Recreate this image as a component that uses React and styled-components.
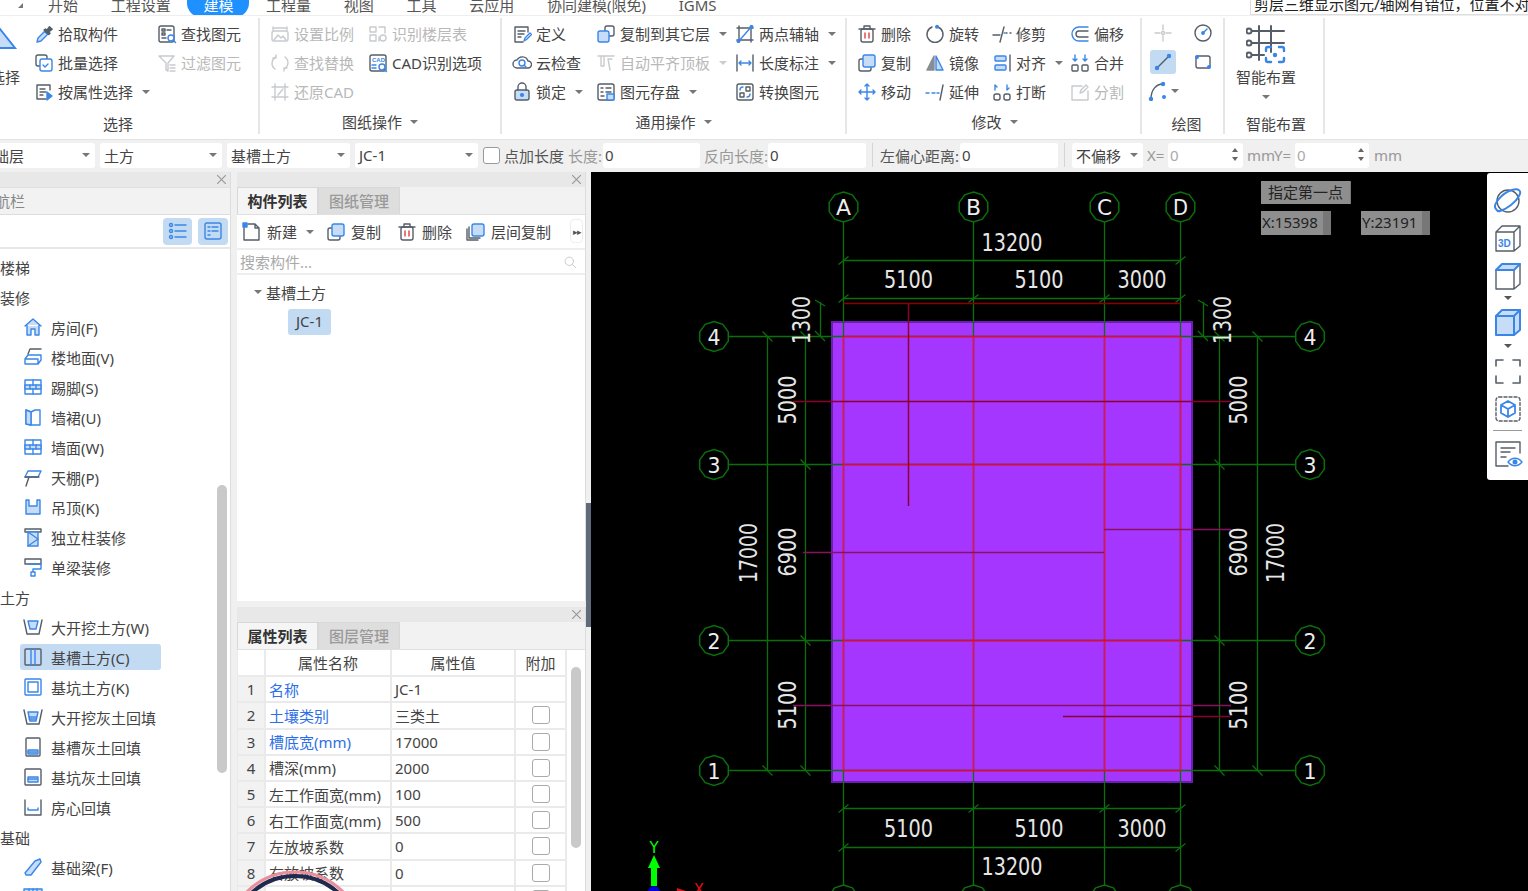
import React from 'react';
import styled, { createGlobalStyle } from 'styled-components';

const Global = createGlobalStyle`
  html, body { margin: 0; padding: 0; background: #f0f0f0; overflow: hidden; }
  * { box-sizing: border-box; }
  body { font-family: "Noto Sans", "Noto Sans CJK SC", sans-serif; font-size: 15px; color: #444; }
`;

const Page = styled.div`width: 1528px; height: 891px; overflow: hidden; display: flex; flex-direction: column; background: #f0f0f0;`;
const TabBar = styled.div`height: 16px; flex: none; background: #fff; display: flex; overflow: hidden; padding-left: 48px; gap: 32.7px; border-bottom: 1px solid #eee; position: relative;`;
const Tab = styled.div`
  height: 22px; margin-top: -5px; line-height: 20px; font-size: 15px; white-space: nowrap; color: ${p => (p.$on ? '#fff' : '#555')};
  ${p => p.$on && 'background:#1e90ff; border-radius: 0 0 14px 14px; padding: 0 16px; margin-left:-16px; margin-right:-16px;'}
`;
const TabArrow = styled.i`position: absolute; left: 18px; top: 3px; border-left: 5px solid transparent; border-bottom: 5px solid #777;`;
const SearchBox = styled.div`position: absolute; left: 1250px; top: -6px; width: 290px; height: 21px; border: 1px solid #ddd; background: #fff; color: #222; font-size: 15px; line-height: 19px; padding-left: 3px; white-space: nowrap;`;

const Ribbon = styled.div`height: 123px; flex: none; background: #fff; display: flex; padding-top: 2px;`;
const Group = styled.section`width: ${p => p.$w}px; height: 116px; border-right: 2px solid #e6e6e6; display: flex; flex-direction: column; padding-top: 1px; padding-left: ${p => p.$pl || 0}px; flex: none;`;
const Cols = styled.div`display: flex; height: 87px;`;
const Col = styled.div`width: ${p => p.$w}px; flex: none; display: flex; flex-direction: column;`;
const Item = styled.div`height: 29px; display: flex; align-items: center; gap: 4px; white-space: nowrap; color: ${p => (p.$off ? '#b8b8b8' : '#444')};`;
const Caret = styled.i`display: inline-block; margin-left: ${p => p.$ml ?? 5}px; margin-top: ${p => p.$mt || 0}px; border-left: 4px solid transparent; border-right: 4px solid transparent; border-top: 4px solid ${p => p.$c || '#777'}; flex: none;`;
const GroupLabel = styled.div`margin-top: auto; height: 20px; line-height: 20px; margin-bottom: ${p => (p.$up ? 2 : 0)}px; margin-left: ${p => p.$ml || 0}px; display: flex; justify-content: center; align-items: center; color: #444; gap: 3px;`;
const BigSelect = styled.div`width: 20px; margin-right: 14px; padding-top: 8px; display: flex; flex-direction: column; align-items: flex-end; overflow: hidden; flex: none;`;
const BigSelectText = styled.div`margin-top: 18px; line-height: 20px; white-space: nowrap;`;
const DrawGrid = styled.div`display: grid; grid-template-columns: 40px 40px; grid-auto-rows: 29px; height: 87px;`;
const DrawCell = styled.div`width: 26px; height: 24px; margin-top: 2px; border-radius: 3px; display: flex; align-items: center; justify-content: center; background: ${p => (p.$on ? '#c2daf2' : 'transparent')}; white-space: nowrap;`;
const Smart = styled.div`width: 82px; display: flex; flex-direction: column; align-items: center; height: 87px; padding-top: 5px;`;
const SmartText = styled.div`line-height: 20px; margin-top: 3px; white-space: nowrap;`;

const Bar = styled.div`height: 33px; flex: none; background: #f0f0f0; border-top: 1px solid #e3e3e3; display: flex; align-items: center; white-space: nowrap; padding-bottom: 2px;`;
const Select = styled.div`width: ${p => p.$w}px; margin-left: ${p => p.$ml ?? 5}px; height: 25px; background: #fff; border-radius: 3px; display: flex; align-items: center; justify-content: space-between; padding: 0 5px 0 4px; flex: none; color: #444;`;
const Label = styled.div`width: ${p => p.$w}px; margin-left: ${p => p.$ml || 0}px; color: ${p => (p.$dim ? '#999' : '#555')}; flex: none;`;
const Field = styled.div`width: ${p => p.$w}px; height: 25px; background: #fff; border-radius: 3px; padding-left: 2px; line-height: 24px; flex: none; color: ${p => (p.$dim ? '#aaa' : '#444')}; position: relative; margin-left: ${p => p.$ml || 0}px;`;
const Spin = styled.div`position: absolute; right: 5px; top: 5px; display: flex; flex-direction: column; gap: 5px;`;
const SpinUp = styled.i`display: block; border-left: 3px solid transparent; border-right: 3px solid transparent; border-bottom: 4px solid #666;`;
const SpinDown = styled.i`display: block; border-left: 3px solid transparent; border-right: 3px solid transparent; border-top: 4px solid #666;`;
const Check = styled.div`width: 17px; height: 17px; border: 1px solid #999; border-radius: 3px; background: #fff; flex: none; margin-left: ${p => p.$ml || 0}px;`;
const VLine = styled.div`width: 1px; height: 24px; background: #d5d5d5; flex: none; margin-left: ${p => p.$ml}px;`;

const Body = styled.div`flex: 1; min-height: 0; display: flex;`;
const Nav = styled.aside`width: 231px; flex: none; background: #fff; border-right: 1px solid #ddd; display: flex; flex-direction: column; position: relative; overflow: hidden;`;
const Middle = styled.div`width: 349px; margin-left: 6px; flex: none; display: flex; flex-direction: column; gap: 6px;`;
const Panel = styled.section`background: #fff; border-right: 1px solid #ddd; display: flex; flex-direction: column; position: relative; overflow: hidden; ${p => (p.$h ? `height:${p.$h}px;flex:none;` : 'flex:1;min-height:0;')}`;
const PanelTitle = styled.div`height: 15px; flex: none; background: #e8e8e8; display: flex; justify-content: flex-end; align-items: center; padding-right: 4px;`;
const CloseX = styled.svg`width: 9px; height: 9px; stroke: #999; stroke-width: 1.2; fill: none;`;
const TabsRow = styled.div`height: 28px; flex: none; background: #f2f2f2; display: flex; border-bottom: 1px solid #e0e0e0;`;
const NavHead = styled.div`height: 28px; flex: none; background: #f2f2f2; color: #888; line-height: 27px; border-bottom: 1px solid #ddd; border-top: 1px solid #e0e0e0; text-indent: -20px;`;
const NavTools = styled.div`height: 34px; flex: none; display: flex; justify-content: flex-end; align-items: center; gap: 6px; padding-right: 2px; border-bottom: 2px solid #e8e8e8;`;
const ViewBtn = styled.div`width: ${p => p.$w}px; height: 27px; background: #c2daf2; border-radius: 4px; display: flex; align-items: center; justify-content: center;`;
const NavList = styled.div`flex: 1; padding-top: 4px; overflow: hidden; display: flex; flex-direction: column;`;
const Section = styled.div`height: 30px; flex: none; line-height: 30px; white-space: nowrap;`;
const NavRow = styled.div`height: 26px; flex: none; margin: 1px 0 3px 20px; width: 141px; display: flex; align-items: center; gap: 8px; padding-left: 3px; border-radius: 3px; white-space: nowrap; background: ${p => (p.$on ? '#c2daf2' : 'transparent')};`;
const ScrollThumb = styled.div`position: absolute; left: ${p => p.$x}px; top: ${p => p.$y}px; width: 10px; height: ${p => p.$h}px; border-radius: 5px; background: #c9c9c9;`;

const PTab = styled.div`width: ${p => (p.$on ? 81 : 82)}px; background: ${p => (p.$on ? '#f5f5f5' : '#dedede')}; color: ${p => (p.$on ? '#333' : '#999')}; font-weight: ${p => (p.$on ? 700 : 500)}; border: 1px solid #d8d8d8; border-bottom: none; text-align: center; line-height: 26px;`;
const ListTools = styled.div`height: 35px; flex: none; display: flex; align-items: center; padding-left: 5px; position: relative; border-bottom: 2px solid #eee; white-space: nowrap;`;
const ToolBtn = styled.div`display: flex; align-items: center; gap: 5px; margin-left: ${p => p.$ml || 0}px; margin-right: ${p => p.$mr}px;`;
const More = styled.div`position: absolute; left: 333px; top: 4px; width: 13px; height: 24px; border: 1px solid #eee; border-radius: 4px; display: flex; align-items: center; justify-content: center; color: #555; font-size: 9px; letter-spacing: -1px;`;
const SearchRow = styled.div`height: 25px; flex: none; padding: 0 8px 0 3px; display: flex; align-items: center; justify-content: space-between; color: #aaa; border-bottom: 2px solid #eee;`;
const Tree = styled.div`flex: 1; padding: 4px 0 0 17px;`;
const TreeHead = styled.div`height: 26px; display: flex; align-items: center; gap: 4px;`;
const Chip = styled.div`margin: 4px 0 0 34px; width: 43px; height: 26px; border-radius: 3px; background: #c2daf2; line-height: 25px; text-align: center;`;

const Table = styled.table`border-collapse: collapse; width: 329px; margin-left: -1px; table-layout: fixed; background: #fff;`;
const Th = styled.th`height: 26.2px; padding: 0; font-weight: 400; color: #444; border: 2px solid #eaeaea; border-top: none;`;
const Td = styled.td`height: 26.2px; padding: 0 0 0 ${p => p.$pl ?? 3}px; border: 2px solid #eaeaea; white-space: nowrap; overflow: hidden; color: ${p => (p.$blue ? '#2c6fe8' : '#444')};`;
const IndexCell = styled(Td)`background: #f2f2f2; text-align: center; padding: 0;`;
const CheckBox = styled.div`width: 18px; height: 18px; border: 1px solid #aaa; border-radius: 3px; margin: auto;`;

const Splitter = styled.div`width: 5px; flex: none; background: #f0f0f0; position: relative;`;
const Handle = styled.div`position: absolute; left: 0; top: 331px; width: 5px; height: 124px; background: #5f6b78;`;
const Canvas = styled.main`flex: 1; background: #000; position: relative; overflow: hidden;`;
const CadSvg = styled.svg`display: block;`;
const Prompt = styled.div`position: absolute; left: ${p => p.$x}px; top: ${p => p.$y}px; width: ${p => p.$w}px; height: ${p => p.$h}px; background: #8e8e8e; color: #222; line-height: ${p => p.$h - 1}px; padding-left: ${p => p.$pl}px; white-space: nowrap; border-right: ${p => p.$br}px solid #777; `;
const SideTools = styled.div`position: absolute; right: 0; top: 1px; width: 41px; height: 307px; background: #fff; border-radius: 3px 0 0 3px; display: flex; flex-direction: column; align-items: center; padding-top: 13px;`;
const SideGap = styled.div`height: ${p => p.$h}px; display: flex; align-items: center;`;
const SideLine = styled.div`width: 29px; height: 1px; background: #999; margin: 6px 0 8px;`;
const CursorRing = styled.svg`position: absolute; left: 240px; top: 865px; pointer-events: none;`;

const Svg = styled.svg`
  width: ${p => p.$s || 20}px; height: ${p => p.$s || 20}px; flex: none; opacity: ${p => (p.$off ? 0.32 : 1)};
  fill: none; stroke: #555e68; stroke-width: 1.4; stroke-linecap: round; stroke-linejoin: round;
  .b { stroke: #3a86e8; } .pale { fill: #c7ddf7; } .solid { fill: #3a86e8; stroke: #3a86e8; } .dark { fill: #555e68; } .red { stroke: #e04040; } .thin { stroke-width: 1; }
`;

const I = {
  pick: <><path d="M3 18l1-4 6.5-6.5 3 3L7 17z" className="pale b" /><path className="dark" d="M10 6l1.5-1 1.5 1 2.5-3.2 2.7 2.4-3.2 2.6 1 1.5-1.2 1.3z" /></>,
  batch: <><rect x="2" y="2" width="11" height="11" rx="2" /><rect x="6" y="6" width="12" height="12" rx="2" fill="#fff" className="b" /><path className="b" d="M9 12l2 2 3-3" /></>,
  attr: <><path d="M16 8V3H3v14h9M6 7h5M6 10h6M6 13h3" /><path className="solid" d="M13 10v8l5-4z" /></>,
  find: <><rect x="2" y="2" width="15" height="16" rx="2" /><rect x="5" y="5" width="3" height="2" /><rect x="5" y="9" width="3" height="2" /><path d="M10 6h4M5 14h4" /><circle className="b" cx="14" cy="14" r="3" fill="#fff" /><path className="b" d="M16 16l2.5 2.5" /></>,
  filter: <><path d="M2 3h15l-6 7v8l-2-1v-7zM13 12h5M13 15h5M13 18h5" /></>,
  scale: <><path d="M3 6V3M17 6V3M3 4h14" /><rect x="2" y="7" width="16" height="10" rx="2" /><path d="M4 16l4-5 3 3 2-2 3 4" /></>,
  layerId: <><path d="M2 8V3h6v5zM11 3h6v6M2 11h6v6H2zM11 13v4" /><circle cx="15" cy="14" r="3" /></>,
  replace: <><path d="M5 16A7 7 0 0 1 6 4M15 4a7 7 0 0 1-1 12M6 2v3H3M14 18v-3h3" /></>,
  cadOpt: <><rect x="2" y="2" width="16" height="16" rx="2" /><text x="4" y="9" fontSize="6" fontWeight="700" fill="#3a86e8" stroke="none" fontFamily="Liberation Sans">CAD</text><path d="M4 12h4M4 15h4" className="b" /><circle className="b" cx="14" cy="14" r="3" fill="#fff" /><path className="b" d="M16 16l2.5 2.5" /></>,
  restore: <><path d="M5 2v16M15 2v16M2 5h16M2 15h16M13 7l-5 6" /></>,
  define: <><path d="M16 8V3H3v15h8M6 7h7M6 10h6M6 13h3" /><path className="b" d="M12 17l1-3 5-5 1.500 1.500-5 5z" /></>,
  cloud: <><path d="M5 15a4 4 0 0 1 0-8 6 6 0 0 1 11 1 3.500 3.500 0 0 1 0 7z" /><circle className="b" cx="10" cy="10" r="3" /><path className="b" d="M12 12l2 2" /></>,
  lock: <><rect x="3" y="8" width="14" height="10" rx="2" className="pale" /><path d="M6 8V5a4 4 0 0 1 8 0v3" /><circle className="solid" cx="10" cy="13" r="1.400" /></>,
  copyTo: <><rect x="9" y="2" width="9" height="10" rx="2" /><rect x="2" y="7" width="11" height="11" rx="2" className="pale b" /></>,
  align: <><path d="M2 3h16M5 4v9h3V4M12 6l2 11M12 6h4" /></>,
  save: <><rect x="2" y="2" width="16" height="16" rx="2" /><path d="M5 6h2M10 6h5M5 10h2M10 10h5M5 14h3" /><rect className="pale b" x="11" y="12" width="7" height="6" /></>,
  twoPoint: <><path d="M4 2v16M16 2v16M2 4h16M2 16h16" /><path className="b" d="M3 18L17 2" /><circle className="solid" cx="3.500" cy="17" r="1.400" /><circle className="solid" cx="16.500" cy="3" r="1.400" /></>,
  dim: <><path d="M2 2v16M18 2v16" /><path className="b" d="M4 10h12M6 8l-2 2 2 2M14 8l2 2-2 2" /></>,
  convert: <><rect x="2" y="2" width="16" height="16" rx="2" /><rect x="5" y="11" width="4" height="4" /><rect x="11" y="5" width="4" height="4" /><path className="b" d="M5 8c0-2 1-3 3-3M15 12c0 2-1 3-3 3" /></>,
  del: <><rect x="4" y="5" width="12" height="13" rx="2" /><path d="M2 5h16M7 5V2h6v3" /><path className="red" d="M8 9v5M12 9v5" /></>,
  rotate: <><path d="M13 3a8 8 0 1 1-6 0" /><circle className="solid" cx="12" cy="2.800" r="1.300" /></>,
  trim: <><path d="M1 11h7M14 9h1M18 9h1" /><path d="M12 3L8 18" /><path className="b" d="M12 9h1" /></>,
  offset: <><path className="b" d="M18 3H9a7 7 0 0 0 0 14h9" /><path d="M18 7H9a3 3 0 0 0 0 6h9" /></>,
  copy: <><rect x="2" y="6" width="12" height="12" rx="2" /><rect x="6" y="2" width="12" height="12" rx="2" className="pale b" /></>,
  mirror: <><path d="M9 3L2 17h7z" className="dark" opacity=".7" /><path className="b pale" d="M11 3l7 14h-7z" /></>,
  alignObj: <><rect className="pale b" x="3" y="3" width="11" height="5" rx="1" /><rect className="pale b" x="3" y="12" width="11" height="5" rx="1" /><path d="M18 2v16" /></>,
  merge: <><rect x="2" y="12" width="6" height="6" rx="1" /><rect x="12" y="12" width="6" height="6" rx="1" /><path className="b" d="M5 2v6M15 2v6M3 6l2 2 2-2M13 6l2 2 2-2" /></>,
  move: <><path className="b" d="M10 2v16M2 10h16M8 4l2-2 2 2M8 16l2 2 2-2M4 8l-2 2 2 2M16 8l2 2-2 2" /></>,
  extend: <><path className="b" d="M1 11h3M7 11h3M12 11h2" /><path d="M18 3l-3 15" /></>,
  breakIt: <><rect x="2" y="12" width="6" height="6" rx="2" /><rect x="12" y="12" width="6" height="6" rx="2" /><path className="b" d="M3 8V3M3 3l2 2M15 3v5M15 8l2-2" /></>,
  split: <><path d="M12 4H2v14h16V9M16 3l-5 5-1 3 3-1 5-5z" /></>,
  point: <><path d="M10 2v5M10 13v5M2 10h5M13 10h5" /><circle cx="10" cy="10" r="1.500" /></>,
  clock: <><circle cx="10" cy="10" r="8" /><path className="b" d="M10 10l4-4" /><circle className="solid" cx="10" cy="10" r="1.200" /></>,
  line: <><path d="M4 16L16 4" /><circle className="solid" cx="4" cy="16" r="1.500" /><circle className="solid" cx="16" cy="4" r="1.500" /></>,
  rect: <><rect x="3" y="4" width="14" height="12" rx="2" /><circle className="solid" cx="4" cy="5" r="1.300" /><circle className="solid" cx="16" cy="15" r="1.300" /></>,
  arc: <><path d="M3 18C3 9 8 3 15 3" /><circle className="solid" cx="3" cy="18" r="1.500" /><circle className="solid" cx="15" cy="3" r="1.500" /><circle className="solid" cx="16" cy="16" r="1.300" /></>,
  smart: <><path strokeWidth="2" d="M13 2v34M25 2v26M6 7h32M6 19h32M6 31h12" /><circle cx="3" cy="7" r="2.500" strokeWidth="2" /><circle cx="3" cy="19" r="2.500" strokeWidth="2" /><circle cx="3" cy="31" r="2.500" strokeWidth="2" /><path className="b" strokeWidth="2.400" d="M25 23h-3a2 2 0 0 0-2 2v2M33 23h3a2 2 0 0 1 2 2v2M20 34v2a2 2 0 0 0 2 2h3M38 34v2a2 2 0 0 1-2 2h-3" /><circle className="solid" cx="29" cy="31" r="1.500" /></>,
  listView: <><path className="b" d="M7 4h11M7 10h11M7 16h11" /><circle className="b" cx="3" cy="4" r="1.500" /><circle className="b" cx="3" cy="10" r="1.500" /><circle className="b" cx="3" cy="16" r="1.500" /></>,
  cardView: <><rect className="b" x="2" y="2" width="16" height="16" rx="2" /><path className="b" d="M5 6h2M9 6h6M5 10h2M9 10h6M5 14h2" /></>,
  house: <><path className="b pale" fill="none" d="M2 9l8-7 8 7M4 8v10h4v-6h4v6h4V8" /></>,
  floor: <><path d="M5 7l2-5h11" /><path className="b" d="M2 17V12l3-4h13v5l-3 4z M2 12h13v5" /></>,
  brick: <><rect className="b" x="2" y="3" width="16" height="14" /><path className="b pale" d="M2 8h16v4H2z" /><path className="b" d="M10 3v5M7 8v4M13 8v4M10 12v5" /></>,
  skirt: <><path className="b" d="M3 3l5 2v13l-5-1zM8 5l4-2h5v15H8" /><path className="b pale" d="M3 3l5 2v13l-5-1z" /></>,
  ceiling: <><path className="b" d="M5 4h13l-3 6H2z" /><path d="M2 10h14M6 10l-3 9" /></>,
  hang: <><path className="b pale" d="M3 3h3v6h8V3h3v14H3z" /></>,
  column: <><path d="M2 2h16v3H2z" /><path className="b pale" d="M5 5h10v14H5z" /><path className="b" d="M5 5l10 7-10 7" /></>,
  beam: <><rect x="2" y="2" width="16" height="5" /><path className="b" d="M6 7h12v5h-8v3M8 15h4v4H8z" /></>,
  dig: <><path d="M1 3l3 14h12l3-14" /><path className="b pale" d="M5 4h10l-2 8H7z" /></>,
  trench: <><rect x="2" y="2" width="16" height="16" rx="1" className="pale" /><path className="b" d="M8 2v16M12 2v16" /></>,
  pit: <><rect className="b" x="2" y="2" width="16" height="16" rx="1" /><rect className="b" x="5" y="5" width="10" height="10" fill="#fff" /></>,
  digFill: <><path d="M1 3l3 14h12l3-14" /><path className="b pale" d="M5 5h10l-2 9H7z" /><path className="b" strokeDasharray="1 1" d="M6 10h8M6 12h8" /></>,
  trenchFill: <><rect x="3" y="1" width="14" height="18" rx="1" /><path className="b pale" d="M5 13h10v4H5z" /><path className="b" strokeDasharray="1 1" d="M5 15h10" /></>,
  pitFill: <><rect x="2" y="2" width="16" height="16" rx="1" /><path className="b pale" d="M5 10h10v5H5z" /><path className="b" strokeDasharray="1 1" d="M5 12h10" /></>,
  roomFill: <><path d="M2 3v15h16V3" /><path className="b" d="M5 13h10M5 11v2M15 11v2" /></>,
  fbeam: <><path className="b pale" d="M2 16l10-12 5-2 1 3L8 18H3z" /></>,
  fbeam2: <><rect className="b pale" x="1" y="2" width="18" height="14" /><path className="b" d="M6 2v14M10 2v14M14 2v14" /></>,
  newDoc: <><path d="M2 5v13h15V6l-4-4H6M13 2v4h4" /><rect className="solid" x="1" y="1" width="4" height="4" /></>,
  floorCopy: <><path d="M1 7v11h11" /><path d="M3 5v11h11" /><rect className="pale b" x="6" y="2" width="12" height="12" rx="2" fill="#fff" /></>,
  search: <><circle cx="9" cy="9" r="6" /><path d="M13.500 13.500L18 18" /></>,
  orbit: <><circle cx="15" cy="15" r="11" /><path className="b" d="M3 23C-1 19 9 7 19 4c7-2 10 1 7 6-3 6-12 13-19 15-2 .5-3 0-4-2z" strokeWidth="2" /></>,
  cube3d: <><path d="M3 10l6-6h18v20l-6 5H3zM3 10h18v19M21 10l6-6" /><text x="5" y="25" fontSize="10" fontWeight="700" fill="#3a86e8" stroke="none" fontFamily="Liberation Sans">3D</text></>,
  cubeTop: <><path d="M3 10v19h18V10M21 29l6-5V4" /><path className="b pale" d="M3 10l6-6h18l-6 6z" strokeWidth="2" /></>,
  cubeFill: <><path className="b pale" strokeWidth="2" d="M3 10l6-6h18v20l-6 5H3z" /><path className="b" strokeWidth="2" d="M3 10h18v19M21 10l6-6" /></>,
  corners: <><path d="M3 10V4h7M20 4h7v6M3 20v7h7M27 20v7h-7" strokeWidth="1.600" /></>,
  dashCube: <><rect x="3" y="3" width="24" height="24" rx="3" strokeDasharray="3 2" /><path className="b" strokeWidth="1.800" d="M15 7l7 4v8l-7 4-7-4v-8zM8 11l7 4 7-4M15 15v8" /></>,
  docEye: <><path d="M27 14V3H3v24h12M8 9h14M8 13h9M8 18h5" /><path className="b" d="M15 23c4-5 10-5 14 0-4 5-10 5-14 0z" /><circle className="solid" cx="22" cy="23" r="1.800" /></>,
};

const Ico = ({ n, s, off, vb = 20 }) => <Svg $s={s} $off={off} viewBox={`0 0 ${vb} ${vb}`}>{I[n]}</Svg>;
const Close = () => <CloseX viewBox="0 0 9 9"><path d="M0 0l9 9M9 0L0 9" /></CloseX>;

const Btn = ({ n, t, off, caret }) => (
  <Item $off={off}>
    <Ico n={n} off={off} />
    <span>{t}</span>
    {caret && <Caret $c={off ? '#ccc' : '#777'} />}
  </Item>
);

const ribbonTabs = ['开始', '工程设置', '建模', '工程量', '视图', '工具', '云应用', '协同建模(限免)', 'IGMS'];

const navA = [['house', '房间(F)'], ['floor', '楼地面(V)'], ['brick', '踢脚(S)'], ['skirt', '墙裙(U)'], ['brick', '墙面(W)'], ['ceiling', '天棚(P)'], ['hang', '吊顶(K)'], ['column', '独立柱装修'], ['beam', '单梁装修']];
const navB = [['dig', '大开挖土方(W)'], ['trench', '基槽土方(C)', true], ['pit', '基坑土方(K)'], ['digFill', '大开挖灰土回填'], ['trenchFill', '基槽灰土回填'], ['pitFill', '基坑灰土回填'], ['roomFill', '房心回填']];
const navC = [['fbeam', '基础梁(F)'], ['fbeam2', '']];

const props = [
  ['名称', 'JC-1', true, false], ['土壤类别', '三类土', true, true], ['槽底宽(mm)', '17000', true, true], ['槽深(mm)', '2000', false, true],
  ['左工作面宽(mm)', '100', false, true], ['右工作面宽(mm)', '500', false, true], ['左放坡系数', '0', false, true], ['右放坡系数', '0', false, true], ['', '', false, true],
];

const NavItems = ({ items }) => items.map(([n, t, on]) => (
  <NavRow key={n + t} $on={on}><Ico n={n} /><span>{t}</span></NavRow>
));

const GREEN = '#0b6f0b';
const XS = [843.5, 973.5, 1104.5, 1180.5];
const YS = [336.5, 464.5, 640.5, 770.5];
const poly = (cx, cy, r = 15) => Array.from({ length: 10 }, (_, i) => {
  const a = (i * 36 - 90) * Math.PI / 180;
  return `${(cx + r * Math.cos(a)).toFixed(1)},${(cy + r * Math.sin(a)).toFixed(1)}`;
}).join(' ');

const DimText = ({ x, y, t, w, rot }) => rot
  ? <text transform={`translate(${x + 9} ${y}) rotate(-90)`} textAnchor="middle" fontFamily="DejaVu Sans" fontSize="24" fill="#e6e6e6" textLength={w} lengthAdjust="spacingAndGlyphs">{t}</text>
  : <text x={x} y={y + 9} textAnchor="middle" fontFamily="DejaVu Sans" fontSize="24" fill="#e6e6e6" textLength={w} lengthAdjust="spacingAndGlyphs">{t}</text>;

const Bubble = ({ x, y, t }) => (
  <g>
    <polygon points={poly(x, y)} fill="#000" stroke={GREEN} strokeWidth="1.500" />
    <text x={x} y={y + 8} textAnchor="middle" fontFamily="DejaVu Sans" fontSize="22" fill="#eee" textLength={t === 'A' || t === 'D' || t === 'B' || t === 'C' ? 15 : 13} lengthAdjust="spacingAndGlyphs">{t}</text>
  </g>
);

const Ln = ({ x1, y1, x2, y2, c = GREEN, w = 1.300 }) => <line x1={x1} y1={y1} x2={x2} y2={y2} stroke={c} strokeWidth={w} />;

const CadDrawing = () => {
  const hDims = [260.5, 298.5, 808.5, 847.5];
  const vDims = [767.5, 805.5, 1219.5, 1257.5];
  return (
    <CadSvg width="937" height="719" viewBox="591 172 937 719">
      <rect x="832" y="322" width="360" height="460" fill="#a536ff" stroke="#6a1fb0" strokeWidth="2" />
      {XS.map(x => <Ln key={x} x1={x} y1={222} x2={x} y2={888} />)}
      {YS.map(y => <Ln key={y} x1={729} y1={y} x2={1295} y2={y} />)}
      {hDims.map(y => <Ln key={y} x1={843.5} y1={y} x2={1180.5} y2={y} />)}
      {vDims.map(x => <Ln key={x} x1={x} y1={336.5} x2={x} y2={770.5} />)}
      <Ln x1={820.5} y1={302} x2={820.5} y2={336.5} />
      <Ln x1={1203.5} y1={302} x2={1203.5} y2={336.5} />
      {hDims.flatMap(y => XS.filter(x => (y === 260.5 || y === 847.5) ? x !== 973.5 && x !== 1104.5 : true).map(x => <Ln key={`${x}-${y}`} x1={x - 5} y1={y + 4} x2={x + 5} y2={y - 4} />))}
      {vDims.flatMap(x => YS.filter(y => (x === 767.5 || x === 1257.5) ? y === 336.5 || y === 770.5 : true).map(y => <Ln key={`${x}_${y}`} x1={x - 5} y1={y - 5} x2={x + 5} y2={y + 5} />))}
      <Ln x1={815} y1={331} x2={825} y2={341} />
      <Ln x1={815} y1={300} x2={825} y2={306} />
      <Ln x1={1198} y1={331} x2={1208} y2={341} />
      <Ln x1={1198} y1={300} x2={1208} y2={306} />

      {XS.map(x => <Ln key={x} x1={x} y1={336.5} x2={x} y2={770.5} c="#e6104f" w={1.500} />)}
      {YS.map(y => <Ln key={y} x1={843.5} y1={y} x2={1180.5} y2={y} c="#f00038" w={1.500} />)}
      <Ln x1={843.5} y1={303.5} x2={1180.5} y2={303.5} c="#8a0000" w={1.500} />
      <Ln x1={908.5} y1={303.5} x2={908.5} y2={506} c="#8a0028" w={1.500} />
      <Ln x1={793} y1={401.5} x2={1231} y2={401.5} c="#8a0028" w={1.500} />
      <Ln x1={803} y1={552.5} x2={1104} y2={552.5} c="#8a1060" w={1.500} />
      <Ln x1={1104} y1={529.5} x2={1231} y2={529.5} c="#8a1060" w={1.500} />
      <Ln x1={793} y1={705.500} x2={1231} y2={705.500} c="#8a1060" w={1.500} />
      <Ln x1={1063} y1={716.500} x2={1230} y2={716.500} c="#8a0028" w={1.500} />

      {['A', 'B', 'C', 'D'].map((t, i) => <Bubble key={t} x={XS[i]} y={207} t={t} />)}
      {XS.map(x => <polygon key={x} points={poly(x, 900)} fill="#000" stroke={GREEN} strokeWidth="1.500" />)}
      {['4', '3', '2', '1'].flatMap((t, i) => [<Bubble key={t + 'l'} x={714} y={YS[i]} t={t} />, <Bubble key={t + 'r'} x={1310} y={YS[i]} t={t} />])}

      <DimText x={1012} y={242} t="13200" w={61} />
      <DimText x={908.500} y={279} t="5100" w={49} />
      <DimText x={1039} y={279} t="5100" w={49} />
      <DimText x={1142} y={279} t="3000" w={49} />
      <DimText x={908.500} y={828} t="5100" w={49} />
      <DimText x={1039} y={828} t="5100" w={49} />
      <DimText x={1142} y={828} t="3000" w={49} />
      <DimText x={1012} y={866} t="13200" w={61} />
      <DimText rot x={801} y={320} t="1300" w={48} />
      <DimText rot x={787} y={400} t="5000" w={49} />
      <DimText rot x={787} y={552} t="6900" w={49} />
      <DimText rot x={787} y={705} t="5100" w={49} />
      <DimText rot x={748} y={553} t="17000" w={60} />
      <DimText rot x={1222} y={320} t="1300" w={48} />
      <DimText rot x={1238} y={400} t="5000" w={49} />
      <DimText rot x={1238} y={552} t="6900" w={49} />
      <DimText rot x={1238} y={705} t="5100" w={49} />
      <DimText rot x={1275} y={553} t="17000" w={60} />

      <text x={654} y={853} textAnchor="middle" fontFamily="DejaVu Sans" fontSize="15" fill="#00ff00">Y</text>
      <rect x="651" y="864" width="6" height="22" fill="#00ff00" />
      <polygon points="654,855 648,868 660,868" fill="#00ff00" />
      <circle cx="654" cy="892" r="6" fill="#0000d0" />
      <polygon points="677,888 686,891 677,895" fill="#e01010" />
      <text x={699} y={895} textAnchor="middle" fontFamily="DejaVu Sans" fontSize="15" fill="#e01010">X</text>
    </CadSvg>
  );
};

export default function App() {
  return (
    <Page>
      <Global />
      <TabBar>
        <TabArrow />
        {ribbonTabs.map(t => <Tab key={t} $on={t === '建模'}>{t}</Tab>)}
        <SearchBox>剪层三维显示图元/轴网有错位，位置不对层</SearchBox>
      </TabBar>

      <Ribbon>
        <Group $w={260}>
          <Cols>
            <BigSelect>
              <svg width="20" height="22" viewBox="0 0 20 22"><path d="M-8 21L0 2l15 19z" fill="#c7ddf7" stroke="#3a86e8" strokeWidth="2" /></svg>
              <BigSelectText>选择</BigSelectText>
            </BigSelect>
            <Col $w={123}>
              <Btn n="pick" t="拾取构件" />
              <Btn n="batch" t="批量选择" />
              <Btn n="attr" t="按属性选择" caret />
            </Col>
            <Col $w={100}>
              <Btn n="find" t="查找图元" />
              <Btn n="filter" t="过滤图元" off />
            </Col>
          </Cols>
          <GroupLabel $ml={-22}>选择</GroupLabel>
        </Group>

        <Group $w={242} $pl={10}>
          <Cols>
            <Col $w={98}>
              <Btn n="scale" t="设置比例" off />
              <Btn n="replace" t="查找替换" off />
              <Btn n="restore" t="还原CAD" off />
            </Col>
            <Col $w={130}>
              <Btn n="layerId" t="识别楼层表" off />
              <Btn n="cadOpt" t="CAD识别选项" />
            </Col>
          </Cols>
          <GroupLabel $up $ml={-10}>图纸操作<Caret /></GroupLabel>
        </Group>

        <Group $w={345} $pl={10}>
          <Cols>
            <Col $w={84}>
              <Btn n="define" t="定义" />
              <Btn n="cloud" t="云检查" />
              <Btn n="lock" t="锁定" caret />
            </Col>
            <Col $w={139}>
              <Btn n="copyTo" t="复制到其它层" caret />
              <Btn n="align" t="自动平齐顶板" off caret />
              <Btn n="save" t="图元存盘" caret />
            </Col>
            <Col $w={110}>
              <Btn n="twoPoint" t="两点辅轴" caret />
              <Btn n="dim" t="长度标注" caret />
              <Btn n="convert" t="转换图元" />
            </Col>
          </Cols>
          <GroupLabel $up $ml={-10}>通用操作<Caret /></GroupLabel>
        </Group>

        <Group $w={295} $pl={10}>
          <Cols>
            <Col $w={68}>
              <Btn n="del" t="删除" />
              <Btn n="copy" t="复制" />
              <Btn n="move" t="移动" />
            </Col>
            <Col $w={67}>
              <Btn n="rotate" t="旋转" />
              <Btn n="mirror" t="镜像" />
              <Btn n="extend" t="延伸" />
            </Col>
            <Col $w={78}>
              <Btn n="trim" t="修剪" />
              <Btn n="alignObj" t="对齐" caret />
              <Btn n="breakIt" t="打断" />
            </Col>
            <Col $w={60}>
              <Btn n="offset" t="偏移" />
              <Btn n="merge" t="合并" />
              <Btn n="split" t="分割" off />
            </Col>
          </Cols>
          <GroupLabel $up $ml={-8}>修改<Caret /></GroupLabel>
        </Group>

        <Group $w={83} $pl={8}>
          <DrawGrid>
            <DrawCell><Ico n="point" off /></DrawCell>
            <DrawCell><Ico n="clock" /></DrawCell>
            <DrawCell $on><Ico n="line" /></DrawCell>
            <DrawCell><Ico n="rect" /></DrawCell>
            <DrawCell><Ico n="arc" /><Caret $ml={3} /></DrawCell>
          </DrawGrid>
          <GroupLabel>绘图</GroupLabel>
        </Group>

        <Group $w={100}>
          <Smart>
            <Ico n="smart" s={40} vb={40} />
            <SmartText>智能布置</SmartText>
            <Caret $ml={0} $mt={8} />
          </Smart>
          <GroupLabel $ml={4}>智能布置</GroupLabel>
        </Group>
      </Ribbon>

      <Bar>
        <Select $w={105} $ml={-10}><span>础层</span><Caret /></Select>
        <Select $w={122}><span>土方</span><Caret /></Select>
        <Select $w={123}><span>基槽土方</span><Caret /></Select>
        <Select $w={123}><span>JC-1</span><Caret /></Select>
        <Check $ml={5} />
        <Label $w={61} $ml={4}>点加长度</Label>
        <Label $w={35} $ml={3} $dim>长度:</Label>
        <Field $w={97}>0</Field>
        <Label $w={64} $ml={4} $dim>反向长度:</Label>
        <Field $w={98}>0</Field>
        <VLine $ml={6} />
        <Label $w={80} $ml={7}>左偏心距离:</Label>
        <Field $w={98}>0</Field>
        <VLine $ml={6} />
        <Select $w={71} $ml={7}><span>不偏移</span><Caret /></Select>
        <Label $w={21} $ml={4} $dim>X=</Label>
        <Field $w={75} $dim>0<Spin><SpinUp /><SpinDown /></Spin></Field>
        <Label $w={27} $ml={4} $dim>mm</Label>
        <Label $w={21} $dim>Y=</Label>
        <Field $w={74} $dim>0<Spin><SpinUp /><SpinDown /></Spin></Field>
        <Label $w={30} $ml={5} $dim>mm</Label>
      </Bar>

      <Body>
        <Nav>
          <PanelTitle><Close /></PanelTitle>
          <NavHead>导航栏</NavHead>
          <NavTools>
            <ViewBtn $w={29}><Ico n="listView" /></ViewBtn>
            <ViewBtn $w={30}><Ico n="cardView" /></ViewBtn>
          </NavTools>
          <NavList>
            <Section>楼梯</Section>
            <Section>装修</Section>
            <NavItems items={navA} />
            <Section>土方</Section>
            <NavItems items={navB} />
            <Section>基础</Section>
            <NavItems items={navC} />
          </NavList>
          <ScrollThumb $x={217} $y={313} $h={288} />
        </Nav>

        <Middle>
          <Panel $h={429}>
            <PanelTitle><Close /></PanelTitle>
            <TabsRow><PTab $on>构件列表</PTab><PTab>图纸管理</PTab></TabsRow>
            <ListTools>
              <ToolBtn $mr={9}><Ico n="newDoc" /><span>新建</span></ToolBtn>
              <Caret $ml={0} />
              <ToolBtn $ml={12} $mr={16}><Ico n="copy" /><span>复制</span></ToolBtn>
              <ToolBtn $mr={14}><Ico n="del" /><span>删除</span></ToolBtn>
              <ToolBtn $mr={0}><Ico n="floorCopy" /><span>层间复制</span></ToolBtn>
              <More>▸▸</More>
            </ListTools>
            <SearchRow><span>搜索构件...</span><Ico n="search" s={14} off /></SearchRow>
            <Tree>
              <TreeHead><Caret $ml={0} /><span>基槽土方</span></TreeHead>
              <Chip>JC-1</Chip>
            </Tree>
          </Panel>

          <Panel>
            <PanelTitle><Close /></PanelTitle>
            <TabsRow><PTab $on>属性列表</PTab><PTab>图层管理</PTab></TabsRow>
            <Table>
              <colgroup><col width="28" /><col width="126" /><col width="124" /><col width="51" /></colgroup>
              <thead><tr><Th /><Th>属性名称</Th><Th>属性值</Th><Th>附加</Th></tr></thead>
              <tbody>
                {props.map(([n, v, blue, chk], i) => (
                  <tr key={i}>
                    <IndexCell>{i + 1 < 9 ? i + 1 : ''}</IndexCell>
                    <Td $blue={blue}>{n}</Td>
                    <Td>{v}</Td>
                    <Td $pl={0}>{chk && <CheckBox />}</Td>
                  </tr>
                ))}
              </tbody>
            </Table>
            <ScrollThumb $x={334} $y={60} $h={181} />
          </Panel>
        </Middle>

        <Splitter><Handle /></Splitter>

        <Canvas>
          <CadDrawing />
          <Prompt $x={670} $y={9} $w={90} $h={23} $pl={7} $br={1}>指定第一点</Prompt>
          <Prompt $x={670} $y={39} $w={70} $h={24} $pl={1} $br={8}>X:15398</Prompt>
          <Prompt $x={770} $y={39} $w={69} $h={24} $pl={1} $br={8}>Y:23191</Prompt>
          <SideTools>
            <Ico n="orbit" s={30} vb={30} />
            <SideGap $h={6} />
            <Ico n="cube3d" s={30} vb={30} />
            <SideGap $h={8} />
            <Ico n="cubeTop" s={30} vb={30} />
            <SideGap $h={16}><Caret $ml={0} $c="#555" /></SideGap>
            <Ico n="cubeFill" s={30} vb={30} />
            <SideGap $h={20}><Caret $ml={0} $c="#555" /></SideGap>
            <Ico n="corners" s={30} vb={30} />
            <SideGap $h={8} />
            <Ico n="dashCube" s={30} vb={30} />
            <SideLine />
            <Ico n="docEye" s={30} vb={30} />
          </SideTools>
        </Canvas>
      </Body>

      <CursorRing width="112" height="26" viewBox="240 865 112 26">
        <circle cx="295" cy="940" r="68" fill="none" stroke="#e98f9c" strokeWidth="3" />
        <circle cx="295" cy="940" r="64" fill="none" stroke="#1f2a4d" strokeWidth="4" />
      </CursorRing>
    </Page>
  );
}
